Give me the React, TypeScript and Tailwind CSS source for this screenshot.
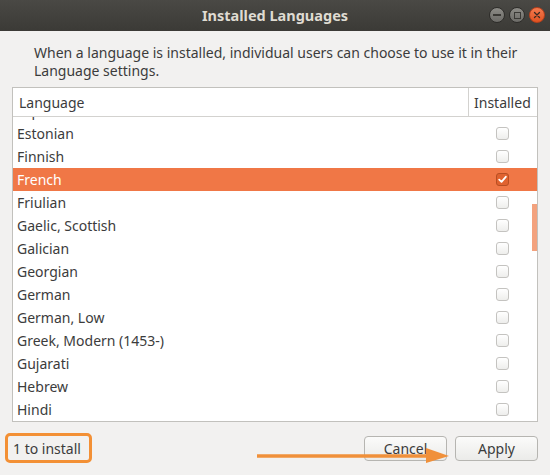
import React from 'react';

const font = { fontFamily: '"Noto Sans", "Open Sans", sans-serif' };

const languages = [
  { name: 'Esperanto', installed: false },
  { name: 'Estonian', installed: false },
  { name: 'Finnish', installed: false },
  { name: 'French', installed: true },
  { name: 'Friulian', installed: false },
  { name: 'Gaelic, Scottish', installed: false },
  { name: 'Galician', installed: false },
  { name: 'Georgian', installed: false },
  { name: 'German', installed: false },
  { name: 'German, Low', installed: false },
  { name: 'Greek, Modern (1453-)', installed: false },
  { name: 'Gujarati', installed: false },
  { name: 'Hebrew', installed: false },
  { name: 'Hindi', installed: false },
];

function Checkbox({ checked }: { checked: boolean }) {
  if (checked) {
    return (
      <div className="flex h-[13px] w-[13px] items-center justify-center rounded-[3px] border border-[#b84e22] bg-[#e0622f]">
        <svg width="9" height="9" viewBox="0 0 9 9">
          <path d="M1.2 4.6 L3.5 6.8 L7.8 1.8" fill="none" stroke="#fff" strokeWidth="1.8" strokeLinecap="round" strokeLinejoin="round" />
        </svg>
      </div>
    );
  }
  return <div className="h-[13px] w-[13px] rounded-[3px] border border-[#c4c3c0] bg-gradient-to-b from-white to-[#eeeeec]" />;
}

function WindowButton({ kind }: { kind: 'min' | 'max' | 'close' }) {
  if (kind === 'close') {
    return (
      <div className="flex h-4 w-4 items-center justify-center rounded-full border border-[#b8401c] bg-gradient-to-b from-[#f37a4e] to-[#e0521f]">
        <svg width="8" height="8" viewBox="0 0 8 8">
          <path d="M1.5 1.5 L6.5 6.5 M6.5 1.5 L1.5 6.5" stroke="#3b2a22" strokeWidth="1.3" strokeLinecap="round" />
        </svg>
      </div>
    );
  }
  return (
    <div className="flex h-4 w-4 items-center justify-center rounded-full border border-[#2e2d2a] bg-gradient-to-b from-[#8c8b86] to-[#6c6b67]">
      {kind === 'min' ? (
        <div className="h-[1.5px] w-[8px] bg-[#3a3935]" />
      ) : (
        <div className="h-[7px] w-[7px] border border-[#3a3935]" />
      )}
    </div>
  );
}

export default function App() {
  return (
    <div className="relative flex h-[475px] w-[550px] flex-col overflow-hidden bg-[#f2f1f0] text-[#3c3c3c]" style={font}>
      {/* title bar */}
      <div className="relative flex h-[31px] items-center justify-center bg-gradient-to-b from-[#4a4945] to-[#3b3a36]">
        <span className="text-[14.5px] font-bold text-[#dfdbd2]">Installed Languages</span>
        <div className="absolute right-[5px] top-[7px] flex gap-[4px]">
          <WindowButton kind="min" />
          <WindowButton kind="max" />
          <WindowButton kind="close" />
        </div>
      </div>

      <p className="mt-[13px] pl-[34px] pr-[20px] text-[14px] leading-[18px]">
        When a language is installed, individual users can choose to use it in their Language settings.
      </p>

      {/* table */}
      <div className="ml-[12px] mt-[7px] flex h-[335px] w-[526px] flex-col border border-[#c2c1bd] bg-white">
        <div className="flex h-[29px] shrink-0 border-b border-[#d3d2cf] text-[14px]">
          <div className="flex flex-1 items-center pl-[6px]">Language</div>
          <div className="flex w-[69px] items-center border-l border-[#d3d2cf] pl-[5px]">Installed</div>
        </div>
        <div className="relative flex-1 overflow-hidden">
          <div className="-mt-[18px]">
            {languages.map((l) => (
              <div
                key={l.name}
                className={`flex h-[23px] items-center text-[14px] ${l.installed ? 'bg-[#f07746] text-white' : ''}`}
              >
                <div className="flex-1 pl-[4px]">{l.name}</div>
                <div className="flex w-[70px] justify-center">
                  <Checkbox checked={l.installed} />
                </div>
              </div>
            ))}
          </div>
          <div className="absolute right-0 top-[87px] h-[47px] w-[5px] bg-[#f3a27e]" />
        </div>
      </div>

      {/* bottom bar */}
      <div className="flex flex-1 items-start justify-between pl-[5px] pr-[12px] pt-[11px]">
        <div className="flex h-[30px] w-[87px] items-center rounded-[5px] border-[3px] border-[#f39035] pl-[5px] text-[14px]">
          1 to install
        </div>
        <div className="mt-[3px] flex gap-[8px]">
          <button className="h-[25px] w-[83px] rounded-[4px] border border-[#b6b5b1] bg-gradient-to-b from-[#fbfbfa] to-[#ebebe9] text-[14px] text-[#3c3c3c]">
            Cancel
          </button>
          <button className="h-[25px] w-[83px] rounded-[4px] border border-[#b6b5b1] bg-gradient-to-b from-[#fbfbfa] to-[#ebebe9] text-[14px] text-[#3c3c3c]">
            Apply
          </button>
        </div>
      </div>

      {/* annotation arrow */}
      <svg className="absolute left-0 top-0" width="550" height="475" viewBox="0 0 550 475">
        <line x1="257" y1="456" x2="432" y2="456" stroke="#f0903a" strokeWidth="3.5" />
        <polygon points="426,448 449,456 426,463" fill="#f0903a" />
      </svg>
    </div>
  );
}
